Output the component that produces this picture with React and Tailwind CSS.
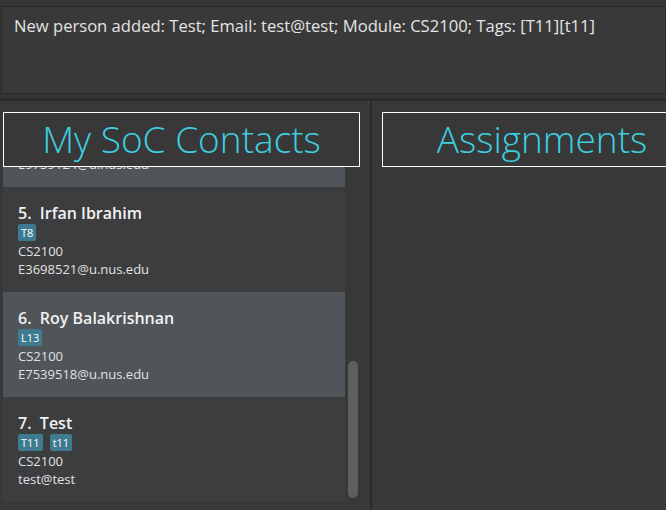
import React from "react";

const people = [
  { n: 4, name: "Sample", tags: ["T1"], mod: "CS2100", email: "E9759124@u.nus.edu" },
  { n: 5, name: "Irfan Ibrahim", tags: ["T8"], mod: "CS2100", email: "E3698521@u.nus.edu" },
  { n: 6, name: "Roy Balakrishnan", tags: ["L13"], mod: "CS2100", email: "E7539518@u.nus.edu" },
  { n: 7, name: "Test", tags: ["T11", "t11"], mod: "CS2100", email: "test@test" },
];

function Card({ p, light }) {
  return (
    <div
      className={`h-[105px] pl-[15px] pt-[16px] ${light ? "bg-[#50555a]" : "bg-[#3c3d3f]"}`}
    >
      <div className="h-[20px] leading-[20px] text-[16px] font-semibold text-[#f2f2f2] whitespace-pre">
        {`${p.n}.  ${p.name}`}
      </div>
      <div className="mt-[1px] flex gap-[7px] h-[18px]">
        {p.tags.map((t) => (
          <span
            key={t}
            className="h-[17px] px-[3px] rounded-[2px] bg-[#3e7b91] text-white text-[11px] leading-[17px]"
          >
            {t}
          </span>
        ))}
      </div>
      <div className="h-[18px] leading-[18px] text-[13px] text-[#e2e2e2]">{p.mod}</div>
      <div className="h-[18px] leading-[18px] text-[13px] text-[#e2e2e2]">{p.email}</div>
    </div>
  );
}

export default function App() {
  return (
    <div
      className="w-[666px] h-[510px] overflow-hidden bg-[#353535] flex flex-col"
      style={{ fontFamily: '"Open Sans", "Noto Sans", sans-serif' }}
    >
      <div className="pt-[6px] pl-[1px]">
        <div className="h-[88px] border border-[#2a2a2a] bg-[#393939] pl-[12px] pt-[8px] text-[16.6px] leading-[22px] text-[#e4e4e4] whitespace-nowrap overflow-hidden">
          New person added: Test; Email: test@test; Module: CS2100; Tags: [T11][t11]
        </div>
      </div>
      <div className="mt-[4px] h-[3px] bg-[#2a2a2a]" />
      <div className="flex flex-1 min-h-0">
        <div className="relative w-[370px] overflow-hidden bg-[#383838]">
          <div className="ml-[3px] w-[342px] mt-[11px] h-[390px] overflow-hidden">
            <div className="-mt-[30px]">
              {people.map((p, i) => (
                <Card key={p.n} p={p} light={i % 2 === 0} />
              ))}
            </div>
          </div>
          <div className="absolute left-[348px] top-[260px] w-[10px] h-[137px] rounded-[5px] bg-[#5e5e5e]" />
          <div className="absolute left-[3px] top-[11px] w-[357px] h-[55px] border border-white bg-[#383838] flex items-center justify-center pb-[3px]">
            <span className="text-[37px] font-light text-[#3ccfe0] leading-none">My SoC Contacts</span>
          </div>
        </div>
        <div className="w-[2px] bg-[#2a2a2a]" />
        <div className="relative flex-1 bg-[#383838]">
          <div className="absolute left-[10px] top-[11px] w-[320px] h-[55px] border border-white bg-[#383838] flex items-center justify-center pb-[3px]">
            <span className="text-[37px] font-light text-[#3ccfe0] leading-none">Assignments</span>
          </div>
        </div>
      </div>
    </div>
  );
}
